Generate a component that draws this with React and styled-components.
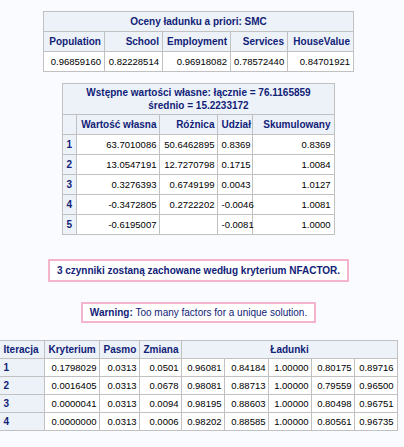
import React from 'react'
import styled, { createGlobalStyle } from 'styled-components'

const GlobalStyle = createGlobalStyle`
    html, body {
        margin: 0;
        padding: 0;
        background: #fafbfe;
    }
    body {
        font-family: "Liberation Sans", Arial, sans-serif;
        font-size: 10px;
    }
`;

const Page = styled.div`
    width: 397px;
    display: flex;
    flex-direction: column;
    align-items: center;
    padding-top: 11px;
`;

const Table = styled.table`
    border-collapse: collapse;
    table-layout: fixed;
    width: ${props => props.$width}px;
    margin-top: ${props => props.$top || 0}px;
    background: #ffffff;
    border: 1px solid #c1c1c1;
`;

const Col = styled.col`
    width: ${props => props.$width}px;
`;

const Head = styled.th`
    background: #edf2f9;
    color: #112277;
    font-weight: bold;
    padding: ${props => props.$pad ?? 3}px 3px;
    line-height: 13px;
    text-align: ${props => props.$align || 'right'};
    border: 1px solid #c1c1c1;
    white-space: nowrap;
`;

const Cell = styled.td`
    color: #000000;
    font-size: 9.5px;
    padding: ${props => props.$pad ?? 3}px 3px;
    line-height: 13px;
    text-align: right;
    border: 1px solid #c1c1c1;
    white-space: nowrap;
`;

const Note = styled.div`
    margin-top: ${props => props.$top}px;
    border: 2px solid #f4b4cc;
    background: #ffffff;
    padding: ${props => props.$pad}px 7px;
    line-height: 13px;
    color: #112277;
    font-weight: ${props => props.$bold ? 'bold' : 'normal'};
    white-space: nowrap;
`;

const Label = styled.span`
    font-weight: bold;
`;

const priori = ['0.96859160', '0.82228514', '0.96918082', '0.78572440', '0.84701921'];

const eigen = [
    ['1', '63.7010086', '50.6462895', '0.8369', '0.8369'],
    ['2', '13.0547191', '12.7270798', '0.1715', '1.0084'],
    ['3', '0.3276393', '0.6749199', '0.0043', '1.0127'],
    ['4', '-0.3472805', '0.2722202', '-0.0046', '1.0081'],
    ['5', '-0.6195007', '', '-0.0081', '1.0000'],
];

const iterations = [
    ['1', '0.1798029', '0.0313', '0.0501', '0.96081', '0.84184', '1.00000', '0.80175', '0.89716'],
    ['2', '0.0016405', '0.0313', '0.0678', '0.98081', '0.88713', '1.00000', '0.79559', '0.96500'],
    ['3', '0.0000041', '0.0313', '0.0094', '0.98195', '0.88603', '1.00000', '0.80498', '0.96751'],
    ['4', '0.0000000', '0.0313', '0.0006', '0.98202', '0.88585', '1.00000', '0.80561', '0.96735'],
];

function App() {
    return (
        <Page>
            <GlobalStyle />

            <Table $width={310}>
                <colgroup>
                    {[61, 58, 68, 57, 66].map((w, i) => <Col key={i} $width={w} />)}
                </colgroup>
                <thead>
                    <tr>
                        <Head colSpan={5} $align="center">Oceny ładunku a priori: SMC</Head>
                    </tr>
                    <tr>
                        {['Population', 'School', 'Employment', 'Services', 'HouseValue'].map(h =>
                            <Head key={h}>{h}</Head>
                        )}
                    </tr>
                </thead>
                <tbody>
                    <tr>
                        {priori.map((v, i) => <Cell key={i}>{v}</Cell>)}
                    </tr>
                </tbody>
            </Table>

            <Table $width={271} $top={11}>
                <colgroup>
                    {[14, 83, 58, 35, 81].map((w, i) => <Col key={i} $width={w} />)}
                </colgroup>
                <thead>
                    <tr>
                        <Head colSpan={5} $align="center" $pad={2}>
                            Wstępne wartości własne: łącznie = 76.1165859<br />średnio = 15.2233172
                        </Head>
                    </tr>
                    <tr>
                        <Head />
                        <Head>Wartość własna</Head>
                        <Head>Różnica</Head>
                        <Head>Udział</Head>
                        <Head>Skumulowany</Head>
                    </tr>
                </thead>
                <tbody>
                    {eigen.map(row => (
                        <tr key={row[0]}>
                            <Head $align="left">{row[0]}</Head>
                            {row.slice(1).map((v, i) => <Cell key={i}>{v}</Cell>)}
                        </tr>
                    ))}
                </tbody>
            </Table>

            <Note $top={24} $pad={3} $bold>3 czynniki zostaną zachowane według kryterium NFACTOR.</Note>

            <Note $top={20} $pad={2}><Label>Warning:</Label> Too many factors for a unique solution.</Note>

            <Table $width={397} $top={17}>
                <colgroup>
                    {[45, 55, 40, 42, 43, 44, 43, 43, 42].map((w, i) => <Col key={i} $width={w} />)}
                </colgroup>
                <thead>
                    <tr>
                        <Head $align="left" $pad={2}>Iteracja</Head>
                        <Head $align="left" $pad={2}>Kryterium</Head>
                        <Head $align="left" $pad={2}>Pasmo</Head>
                        <Head $align="left" $pad={2}>Zmiana</Head>
                        <Head colSpan={5} $align="center" $pad={2}>Ładunki</Head>
                    </tr>
                </thead>
                <tbody>
                    {iterations.map(row => (
                        <tr key={row[0]}>
                            <Head $align="left" $pad={2}>{row[0]}</Head>
                            {row.slice(1).map((v, i) => <Cell key={i} $pad={2}>{v}</Cell>)}
                        </tr>
                    ))}
                </tbody>
            </Table>
        </Page>
    );
}

export default App;
